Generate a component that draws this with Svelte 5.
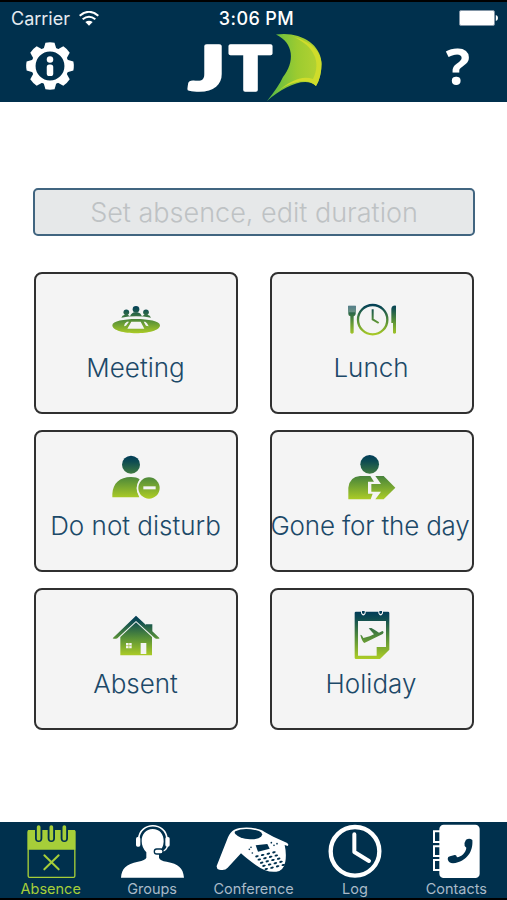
<script>
	let active = "absence";
	const options = [
		{ id: "meeting", label: "Meeting", view: "243 80 180 156", from: 118, to: 206 },
		{ id: "lunch", label: "Lunch", view: "245 80 180 156", from: 112, to: 212 },
		{ id: "dnd", label: "Do not disturb", view: "243 75 180 156", from: 90, to: 222 },
		{ id: "gone", label: "Gone for the day", view: "245 75 180 156", from: 88, to: 226 },
		{ id: "absent", label: "Absent", view: "243 75 180 156", from: 96, to: 220 },
		{ id: "holiday", label: "Holiday", view: "245 75 180 156", from: 84, to: 230 },
	];
	const tabs = [
		{ id: "absence", label: "Absence", view: "32 21 240 174" },
		{ id: "groups", label: "Groups", view: "336 21 240 174" },
		{ id: "conference", label: "Conference", view: "640 21 240 174" },
		{ id: "log", label: "Log", view: "185 21 240 174" },
		{ id: "contacts", label: "Contacts", view: "490 21 240 174" },
	];
	const teeth = [0, 45, 90, 135, 180, 225, 270, 315];
	const keys = [];
	for (let r = 0; r < 5; r++) {
		for (let c = 0; c < 4; c++) keys.push({ x: 769 + c * 17 + r * 7, y: 124 + r * 9.5 - c * 4 });
	}
</script>

<div class="app">
	<header>
		<div class="status">
			<div class="carrier">
				<span>Carrier</span>
				<svg width="20" height="15" viewBox="240 29 60 45" fill="none" stroke="#fff" stroke-width="6">
					<path d="M242 43 Q270 20 298 43" />
					<path d="M251 54 Q270 38 289 54" />
					<path d="M270 73 L259 62 Q270 54 281 62 Z" fill="#fff" stroke="none" />
				</svg>
			</div>
			<span class="time">3:06 PM</span>
			<svg class="battery" width="39" height="16" viewBox="0 0 39 16" fill="#fff">
				<rect x=".5" y=".5" width="35" height="15" rx="1.5" stroke="#8295a6" />
				<path d="M36.8 5 Q39 5.5 39 8 T36.8 11 Z" />
			</svg>
		</div>
		<div class="brand">
			<button class="settings" aria-label="Settings">
				<svg width="48" height="48" viewBox="-74 -74 148 148" fill="#fff">
					{#each teeth as angle}
						<path transform={`rotate(${angle})`} d="M-21 -48 L-14 -72 Q0 -75 14 -72 L21 -48 Z" />
					{/each}
					<circle r="51" fill="none" stroke="#fff" stroke-width="13" />
					<circle cy="-20" r="10" />
					<rect x="-10" y="-5" width="20" height="36" rx="8" />
				</svg>
			</button>
			<svg class="logo" width="138" height="68" viewBox="186 34 138 68">
				<defs>
					<linearGradient id="sail" x1="0" x2="1">
						<stop offset="0" stop-color="#55b947" />
						<stop offset=".55" stop-color="#9ccb30" />
						<stop offset="1" stop-color="#b7d332" />
					</linearGradient>
				</defs>
				<text x="189" y="90" textLength="36" lengthAdjust="spacingAndGlyphs">J</text>
				<text x="229.500" y="90" textLength="42" lengthAdjust="spacingAndGlyphs">T</text>
				<path d="M276 34.5 C299 31 320 43 321.500 62 Q322 76 316 86 C306 76 284 86 267 101 Q279 86 283 77 C295 62 294 43 276 34.500 Z" fill="url(#sail)" />
				<path d="M294 37 C312 42 321 52 321.500 64 Q321 78 316 86 C306 76 286 84 276 93 C290 80 303 75 313 79 C322 61 313 46 294 37 Z" fill="#cfdc2b" />
			</svg>
			<button class="help" aria-label="Help">?</button>
		</div>
	</header>

	<main>
		<input placeholder="Set absence, edit duration" />
		<div class="grid">
			{#each options as option}
				<button class={`card ${option.id}`}>
					<svg width="60" height="52" viewBox={option.view} fill={`url(#g-${option.id})`}>
						<defs>
							<linearGradient id={`g-${option.id}`} gradientUnits="userSpaceOnUse" x1="0" x2="0" y1={option.from} y2={option.to}>
								<stop offset="0" stop-color="#003a58" />
								<stop offset=".15" stop-color="#0d4b52" />
								<stop offset=".55" stop-color="#568f38" />
								<stop offset="1" stop-color="#b0cf25" />
							</linearGradient>
						</defs>
						{#if option.id === "meeting"}
							<circle cx="333" cy="132" r="10" />
							<circle cx="304" cy="141" r="8.500" />
							<circle cx="363" cy="141" r="8.500" />
							<path d="M289 157 Q291 149 300 148 H308 L315 153 Q320 142 329 141 H338 Q347 143 351 153 L358 148 H367 Q376 150 378 157 Q333 149 289 157 Z" />
							<path fill-rule="evenodd" d="M262 180 C262 155 405 155 405 180 C405 212 262 212 262 180 Z M319 169 L307 190 H358 L347 169 Z M306 169 Q298 173 297 183 L303 181 L312 169 Z M356 169 L363 181 L371 183 Q367 173 361 169 Z" />
							<path d="M270 165 Q333 148 397 165" fill="none" stroke="#f4f4f4" stroke-width="3" />
						{:else if option.id === "lunch"}
							<circle cx="337" cy="163" r="44" fill="none" stroke="url(#g-lunch)" stroke-width="7" />
							<path d="M337 132 V162 L355 173" fill="none" stroke="url(#g-lunch)" stroke-width="6" />
							<path d="M264 121 H286 V146 Q285 151 280 153 V202 Q275 208 270 202 V153 Q264 151 264 146 Z" />
							<path d="M269 121 V141 M275 121 V141 M281 121 V141" stroke="#f4f4f4" stroke-width="2" />
							<path d="M407 121 V203 Q402 207 398 203 V173 H393 V130 Q395 119 407 121 Z" />
						{:else if option.id === "dnd"}
							<circle cx="318" cy="119" r="27" />
							<path d="M262 217 V206 C264 175 284 156 318 156 Q335 156 344 163 Q326 188 343 217 Z" />
							<circle cx="372" cy="189" r="36" fill="#f4f4f4" />
							<circle cx="372" cy="189" r="32" />
							<rect x="355" y="184" width="37" height="9" fill="#f4f4f4" />
						{:else if option.id === "gone"}
							<circle cx="328" cy="118" r="28" />
							<path d="M264 223 V188 Q268 155 299 153 H330 L341 170 H323 V206 H337 L331 223 Z" />
							<path d="M345 153 H370 L405 188 L370 223 H345 L362 200 H333 V177 H362 Z" />
						{:else if option.id === "absent"}
							<path d="M263 166 L333 98 L363 126 V124 H382 V145 L404 166 Q397 169 390 166 L333 114 L277 166 Q269 169 263 166 Z" />
							<path fill-rule="evenodd" d="M286 162 L333 118 L381 162 V217 H286 Z M303 180 V196 H320 V180 Z M347 180 V213 H364 V180 Z" />
							<path d="M311.500 180 V196 M303 188 H320" stroke="#9abd2c" stroke-width="2" />
						{:else}
							<path fill-rule="evenodd" d="M287 86 H302 V91 Q309 104 316 91 V86 H354 V91 Q361 104 368 91 V86 H383 Q387 86 387 90 V200 L359 228 H287 Q283 228 283 224 V90 Q283 86 287 86 Z M293 114 V218 H349 V192 H377 V114 Z" />
							<path d="M305 84 H313 V90 Q309 96 305 90 Z M357 84 H365 V90 Q361 96 357 90 Z" />
							<path d="M300 155 Q305 155 309 165 L328 160 L341 154 L325 136 L333 135 Q346 142 356 149 L366 144 Q373 147 367 153 L312 180 Q305 176 300 155 Z" />
						{/if}
					</svg>
					<span>{option.label}</span>
				</button>
			{/each}
		</div>
	</main>

	<nav>
		{#each tabs as tab}
			<button class="tab" class:active={active === tab.id} on:click={() => (active = tab.id)}>
				<svg width="80" height="58" viewBox={tab.view} fill="#fff">
					{#if tab.id === "absence"}
						<rect x="83.500" y="47" width="140" height="140" rx="4" fill="none" stroke="#a6ce39" stroke-width="4" />
						<path d="M82 48 Q82 45 86 45 H221 Q225 45 225 49 V104 H82 Z" fill="#a6ce39" />
						<g stroke-linecap="round">
							<path d="M115 42 V70 M153 42 V70 M192 42 V70" stroke="#00304d" stroke-width="22" />
							<path d="M115 36 V71 M153 36 V71 M192 36 V71" stroke="#a6ce39" stroke-width="11" />
							<path d="M132 121 L175 163 M175 121 L132 163" stroke="#a6ce39" stroke-width="6" />
						</g>
					{:else if tab.id === "groups"}
						<path d="M458 42 C479 42 492 58 491 80 Q490 98 477 112 V128 Q480 137 500 140 C536 147 549 158 552 188 H363 C365 160 378 147 414 140 Q436 136 439 128 V112 Q425 97 425 78 C425 57 438 42 458 42 Z" />
						<path d="M416 72 C419 19 498 19 501 72" fill="none" stroke="#fff" stroke-width="5" />
						<rect x="408" y="66" width="13" height="29" rx="5" />
						<rect x="496" y="66" width="13" height="29" rx="5" />
						<path d="M503 91 Q500 107 485 109" fill="none" stroke="#fff" stroke-width="4" />
						<rect x="463" y="102" width="26" height="15" rx="7" stroke="#00304d" stroke-width="4" />
					{:else if tab.id === "conference"}
						<path d="M701 44 C720 34 767 34 792 51 L818 65 L858 83 Q866 87 861 93 L852 90 Q858 116 854 140 Q849 167 827 170 Q798 174 765 150 Q737 130 721 115 L681 158 Q673 168 656 164 Q647 162 648 153 L682 67 Q689 50 701 44 Z" />
						<path d="M704 49 Q731 35 775 48 Q789 54 782 64 Q774 74 748 73 Q717 71 704 57 Q700 52 704 49 Z" fill="#00304d" />
						<path d="M765 91 L800 87 L807 101 L772 110 Z" fill="#00304d" />
						<g fill="#00304d">
							{#each keys as key}
								<ellipse cx={key.x} cy={key.y} rx="5.500" ry="3" transform={`rotate(-15 ${key.x} ${key.y})`} />
							{/each}
							<circle cx="812" cy="83" r="2.500" />
							<circle cx="820" cy="91" r="2.500" />
							<circle cx="829" cy="86" r="2.500" />
							<circle cx="746" cy="103" r="2.500" />
							<circle cx="755" cy="114" r="2.500" />
							<circle cx="751" cy="97" r="2.500" />
						</g>
					{:else if tab.id === "log"}
						<circle cx="305" cy="109" r="73" fill="none" stroke="#fff" stroke-width="13" />
						<path d="M303 58 V111 L347 138" fill="none" stroke="#fff" stroke-width="12" stroke-linecap="round" stroke-linejoin="round" />
					{:else}
						<rect x="560" y="29" width="121" height="160" rx="13" />
						<path d="M563 49 H544 V81 H563 M563 94 H544 V123 H563 M563 135 H544 V165 H563" fill="none" stroke="#fff" stroke-width="6" />
						<path d="M640 74 Q651 68 659 75 C662 107 644 140 601 145 Q588 145 585 132 Q585 125 592 124 L606 120 Q611 119 613 127 C626 125 640 113 641 98 L636 93 Q634 82 640 74 Z" fill="#00304d" />
					{/if}
				</svg>
				<span>{tab.label}</span>
			</button>
		{/each}
	</nav>
</div>

<style>
	:global(body) {
		background: #fff;
	}
	.app {
		display: flex;
		flex-direction: column;
		height: 900px;
		width: 507px;
		overflow: hidden;
		font-family: Inter, "Liberation Sans", sans-serif;
	}
	button {
		border: 0;
		padding: 0;
		margin: 0;
		background: none;
		font: inherit;
		color: inherit;
	}
	svg {
		display: block;
		flex: none;
	}
	header {
		box-sizing: border-box;
		height: 102px;
		border-top: 2px solid #000;
		background: #00304d;
		color: #fff;
	}
	.status {
		display: grid;
		grid-template-columns: 1fr auto 1fr;
		align-items: center;
		height: 32px;
		padding: 0 9px 0 11px;
		font-size: 18px;
	}
	.carrier {
		display: flex;
		align-items: center;
		gap: 9px;
		color: #e5ebf0;
	}
	.time {
		font-weight: 500;
		letter-spacing: 0.4px;
		padding-left: 4px;
	}
	.battery {
		justify-self: end;
	}
	.brand {
		display: flex;
		align-items: flex-start;
		padding: 0 37px 0 26px;
	}
	.settings {
		margin-top: 8px;
	}
	.logo {
		margin-left: 112px;
		overflow: visible;
	}
	.logo text {
		font: 900 60px Lato, sans-serif;
		fill: #fff;
		stroke: #fff;
		stroke-width: 3.5px;
		stroke-linejoin: round;
	}
	.help {
		margin: 3px 0 0 auto;
		font: 700 51px/56px "Open Sans", sans-serif;
	}
	main {
		flex: 1;
		padding: 86px 32px 0 33px;
	}
	input {
		display: block;
		box-sizing: border-box;
		width: 442px;
		height: 48px;
		border: 2px solid #416580;
		border-radius: 5px;
		background: #e6e8e9;
		text-align: center;
		font: 300 27px Inter, sans-serif;
	}
	input::placeholder {
		color: #bec2c4;
		opacity: 1;
	}
	.grid {
		display: grid;
		grid-template-columns: 204px 204px;
		grid-auto-rows: 142px;
		gap: 16px 31.5px;
		margin: 36px 0 0 1px;
	}
	.card {
		box-sizing: border-box;
		display: flex;
		flex-direction: column;
		align-items: center;
		padding-top: 18px;
		border: 2px solid #303030;
		border-radius: 8px;
		background: #f4f4f4;
		color: #1c4968;
		font-weight: 300;
		font-size: 26px;
		line-height: 48px;
		white-space: nowrap;
	}
	.card span {
		padding-right: 1px;
	}
	.gone span {
		letter-spacing: -0.2px;
		padding-right: 3px;
	}
	nav {
		box-sizing: border-box;
		display: flex;
		height: 78px;
		border-bottom: 2px solid #000;
		background: #00304d;
	}
	.tab {
		flex: 1;
		display: flex;
		flex-direction: column;
		align-items: center;
		color: #a9bac8;
		font-size: 14.5px;
		line-height: 17px;
	}
	.tab.active {
		color: #a6ce39;
	}
</style>
